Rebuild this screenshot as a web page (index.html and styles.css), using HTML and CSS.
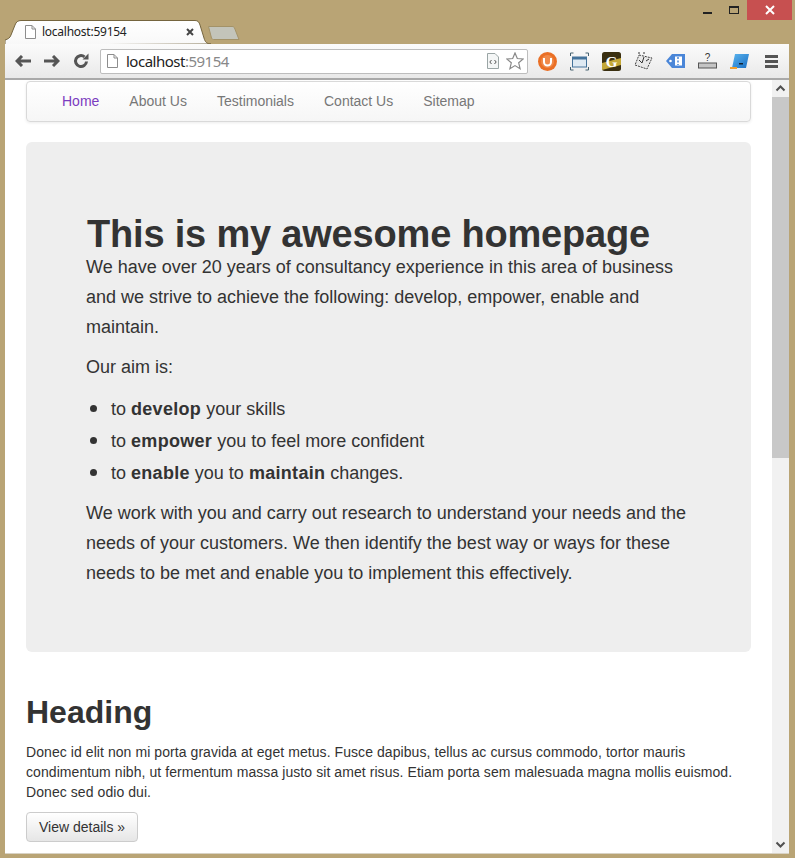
FILE: index.html
```html
<!DOCTYPE html>
<html lang="en">
<head>
<meta charset="utf-8">
<title>localhost:59154</title>
<link rel="stylesheet" href="styles.css">
</head>
<body>
<div class="titlebar">
  <div class="tabs">
    <div class="tab">
      <svg class="tab-shape" width="206" height="24" viewBox="0 0 206 24"><defs><linearGradient id="tg" x1="0" y1="0" x2="0" y2="1"><stop offset="0" stop-color="#fff"/><stop offset="1" stop-color="#f8f8f8"/></linearGradient></defs><path d="M0 25L0 20C3 19 5 18 6 15L10 5C11 2 13 .5 16 .5L190 .5C193 .5 194 2 195 5L199 18C200 22 202 24 206 24Z" fill="url(#tg)" stroke="#75653f"/></svg>
      <svg class="fav" width="11" height="14" viewBox="0 0 11 14"><path d="M.5.5H7L10.500 4V13.500H.5Z M7 .5V4H10.500" fill="#fff" stroke="#8d8d8d"/></svg>
      <span class="tab-title">localhost:59154</span>
      <svg class="tab-close" width="8" height="8" viewBox="0 0 8 8"><path d="M1 1L7 7M7 1L1 7" stroke="#444" stroke-width="2"/></svg>
    </div>
    <svg class="newtab" width="32" height="14" viewBox="0 0 32 14"><path d="M.5.5H24C25.500.5 26 1 26.500 2L31 13.500H5.500C4.500 13.500 4 13 3.500 12Z" fill="#c3c4ba" stroke="#a39268"/></svg>
  </div>
  <div class="winctl">
    <span class="min"></span>
    <span class="max"></span>
    <span class="close"><svg width="10" height="10" viewBox="0 0 10 10"><path d="M1 1L9 9M9 1L1 9" stroke="#fff" stroke-width="2"/></svg></span>
  </div>
</div>
<div class="window">
  <div class="toolbar">
    <div class="navbtns">
      <svg width="16" height="12" viewBox="0 0 16 12"><path d="M7 1L2 6L7 11M2 6H16" fill="none" stroke="#555" stroke-width="3"/></svg>
      <svg width="16" height="12" viewBox="0 0 16 12"><path d="M9 1L14 6L9 11M14 6H0" fill="none" stroke="#555" stroke-width="3"/></svg>
      <svg width="16" height="16" viewBox="0 0 16 16"><path d="M13.500 8.500A5.500 5.500 0 1 1 11.500 3.800" fill="none" stroke="#555" stroke-width="3"/><path d="M9.500 6.500H15.500V.5Z" fill="#555"/></svg>
    </div>
    <div class="omnibox">
      <svg width="11" height="14" viewBox="0 0 11 14"><path d="M.5.5H7L10.500 4V13.500H.5Z M7 .5V4H10.500" fill="#fff" stroke="#8d8d8d"/></svg>
      <span class="url"><span class="host">localhost</span>:59154</span>
      <svg class="srcicon" width="12" height="16" viewBox="0 0 12 16"><path d="M.5.5H8L11.500 4V15.500H.5Z" fill="#f4f6f6" stroke="#9aa5a5"/><path d="M4.500 7L2.800 9L4.500 11M7.500 7L9.200 9L7.500 11" fill="none" stroke="#555"/></svg>
      <svg class="star" width="18" height="18" viewBox="0 0 18 18"><path d="M9 1L11.300 6.500L17.200 7L12.700 10.800L14.100 16.700L9 13.600L3.900 16.700L5.300 10.800L.8 7L6.700 6.500Z" fill="#fff" stroke="#888" stroke-width="1.200"/></svg>
    </div>
    <div class="exts">
      <svg width="19" height="19" viewBox="0 0 19 19"><circle cx="9.500" cy="9.500" r="9.500" fill="#ea6f25"/><circle cx="9.500" cy="9.500" r="6.500" fill="#f08a4a"/><path d="M6 6V10A3.500 3.500 0 0 0 13 10V6" fill="none" stroke="#fff" stroke-width="2"/></svg>
      <svg width="19" height="19" viewBox="0 0 19 19"><rect x="2.500" y="5" width="14" height="10" fill="#dfeaf3" stroke="#44739b"/><rect x="3" y="5" width="13" height="2.500" fill="#44739b"/><path d="M.5 4V1H3.500M15.500 1H18.500V4M18.500 15V18H15.500M3.500 18H.5V15" fill="none" stroke="#44606f"/></svg>
      <svg width="19" height="19" viewBox="0 0 19 19"><rect width="19" height="19" rx="2.500" fill="#3a2f10"/><path d="M0 11L19 6V13L0 18Z" fill="#c4a838"/><text class="gmark" x="9.500" y="15" text-anchor="middle">G</text></svg>
      <svg width="19" height="18" viewBox="0 0 19 18"><path d="M5 3L18 6L13 17L1 13Z" fill="#e8e8e8" stroke="#444" stroke-dasharray="2 1"/><path d="M5 8L8 11M10 5L8 11M12 9L15 7M4 1H6M9 1H11" stroke="#333" fill="none"/></svg>
      <svg width="19" height="16" viewBox="0 0 19 16"><path d="M6 1H19V15H6L0 8Z" fill="#4a86d8"/><rect x="9" y="3.500" width="7" height="9" fill="#fff"/><path d="M12 4V12" stroke="#4a86d8" stroke-width="1.500" stroke-dasharray="2 1.500"/><circle cx="4.500" cy="8" r="1.300" fill="#fff"/></svg>
      <svg width="19" height="16" viewBox="0 0 19 16"><rect x=".5" y="10" width="18" height="5" fill="#c4c4c4" stroke="#555"/><text class="qmark" x="9.500" y="8" text-anchor="middle">?</text></svg>
      <svg width="19" height="17" viewBox="0 0 19 17"><defs><linearGradient id="cg" x1="0" y1="0" x2="1" y2="1"><stop offset="0" stop-color="#5ab4ee"/><stop offset="1" stop-color="#1a6fc4"/></linearGradient></defs><path d="M5 1H19L16 15H2Z" fill="url(#cg)"/><path d="M9 10H13V11.500H9Z" fill="#123"/><path d="M0 14H7V16H0Z" fill="#f0a030"/></svg>
    </div>
    <svg class="menu" width="13" height="13" viewBox="0 0 13 13"><path d="M0 1.500H13M0 6.500H13M0 11.500H13" stroke="#555" stroke-width="3"/></svg>
  </div>
  <div class="viewport">
    <main class="page">
      <nav class="navbar">
        <a class="navlink active" href="#">Home</a>
        <a class="navlink" href="#">About Us</a>
        <a class="navlink" href="#">Testimonials</a>
        <a class="navlink" href="#">Contact Us</a>
        <a class="navlink" href="#">Sitemap</a>
      </nav>
      <section class="jumbotron">
        <h1>This is my awesome homepage</h1>
        <p>We have over 20 years of consultancy experience in this area of business and we strive to achieve the following: develop, empower, enable and maintain.</p>
        <p>Our aim is:</p>
        <ul>
          <li>to <strong>develop</strong> your skills</li>
          <li>to <strong>empower</strong> you to feel more confident</li>
          <li>to <strong>enable</strong> you to <strong>maintain</strong> changes.</li>
        </ul>
        <p>We work with you and carry out research to understand your needs and the needs of your customers. We then identify the best way or ways for these needs to be met and enable you to implement this effectively.</p>
      </section>
      <h2>Heading</h2>
      <p class="body-copy">Donec id elit non mi porta gravida at eget metus. Fusce dapibus, tellus ac cursus commodo, tortor mauris condimentum nibh, ut fermentum massa justo sit amet risus. Etiam porta sem malesuada magna mollis euismod. Donec sed odio dui.</p>
      <a class="btn" href="#">View details »</a>
    </main>
    <div class="scrollbar">
      <svg class="arrow" width="17" height="17" viewBox="0 0 17 17"><path d="M4.500 10.500L8.500 6.500L12.500 10.500" fill="none" stroke="#505050" stroke-width="2"/></svg>
      <div class="thumb"></div>
      <svg class="arrow arrow-down" width="17" height="17" viewBox="0 0 17 17"><path d="M4.500 6.500L8.500 10.500L12.500 6.500" fill="none" stroke="#505050" stroke-width="2"/></svg>
    </div>
  </div>
</div>
</body>
</html>
```
FILE: styles.css
```css
* { box-sizing: border-box; }
html, body { margin: 0; height: 858px; overflow: hidden; }
body {
  background: #b9a475;
  padding: 0 6px 4px 5px;
  display: flex;
  flex-direction: column;
  font-family: "Liberation Sans", Arial, sans-serif;
  color: #333;
}
.titlebar {
  height: 44px;
  flex: none;
  display: flex;
  justify-content: space-between;
  margin-right: -3px;
}
.tabs {
  display: flex;
  align-items: flex-end;
}
.tab {
  position: relative;
  width: 206px;
  height: 24px;
  display: flex;
  align-items: center;
  padding: 0 0 1px 20px;
}
.tab-shape { position: absolute; left: 0; top: 0; }
.fav, .tab-title, .tab-close { position: relative; }
.tab-title {
  margin-left: 6px;
  font: 12px/16px "Noto Sans", sans-serif;
  letter-spacing: -0.25px;
  color: #222;
}
.tab-close { margin-left: 59px; }
.newtab { margin: 0 0 4px -3px; }
.winctl { display: flex; align-items: flex-start; height: 20px; }
.min { width: 9px; height: 2px; background: #222; margin: 12px 0 0; }
.max { width: 10px; height: 8px; border: 1px solid #222; border-top-width: 2px; margin: 6px 0 0 17px; }
.close {
  width: 45px;
  height: 20px;
  background: #c75050;
  margin-left: 8px;
  display: flex;
  align-items: center;
  justify-content: center;
}
.window { flex: 1; display: flex; flex-direction: column; min-height: 0; background: #fff; }
.toolbar {
  height: 36px;
  flex: none;
  display: flex;
  align-items: center;
  background: linear-gradient(#fbfbfb, #e9e9e9);
  border-bottom: 2px solid #a9a9a9;
  padding-left: 10px;
}
.navbtns { display: flex; align-items: center; gap: 13px; width: 85px; }
.omnibox {
  width: 428px;
  height: 25px;
  background: #fff;
  border: 1px solid #bdbdbd;
  border-radius: 2px;
  display: flex;
  align-items: center;
  padding-left: 6px;
}
.url {
  margin-left: 8px;
  font: 15px/20px "Noto Sans", sans-serif;
  letter-spacing: -0.5px;
  color: #888;
  flex: 1;
}
.host { color: #222; }
.srcicon { margin-right: 7px; }
.star { margin-right: 3px; }
.exts { display: flex; align-items: center; gap: 13px; margin-left: 10px; }
.gmark { font: bold 15px "Liberation Serif", serif; fill: #fff; }
.qmark { font: 10px "Liberation Sans", sans-serif; fill: #333; }
.menu { margin-left: 16px; }
.viewport { flex: 1; display: flex; min-height: 0; border-bottom: 1px solid #d8d2c4; }
.page { flex: 1; min-width: 0; padding: 1px 21px 0; overflow: hidden; }
.navbar {
  height: 41px;
  display: flex;
  align-items: center;
  padding: 0 0 2px 20px;
  margin-bottom: 20px;
  border: 1px solid #d9d9d9;
  border-radius: 4px;
  background: linear-gradient(#fff, #f6f6f6);
  box-shadow: 0 1px 3px rgba(0,0,0,.08);
}
.navlink {
  padding: 0 15px;
  font-size: 14px;
  line-height: 20px;
  color: #777;
  text-decoration: none;
}
.navlink.active { color: #7b3cc0; }
.jumbotron {
  height: 510px;
  padding: 60px;
  margin-bottom: 40px;
  background: #eee;
  border-radius: 6px;
  font-size: 18px;
  line-height: 30px;
}
.jumbotron h1 {
  margin: 0;
  font-size: 38px;
  letter-spacing: -0.19px;
  line-height: 50px;
  font-weight: bold;
  padding: 7px 0 0 1px;
  height: 50px;
}
.jumbotron p { margin: 0 0 10px; }
.jumbotron ul { margin: 0 0 10px; padding-left: 25px; }
.jumbotron li::marker { font-size: 24px; }
.jumbotron strong { letter-spacing: 0.3px; }
h2 {
  margin: 0 0 10px;
  font-size: 32px;
  line-height: 40px;
  font-weight: bold;
}
.body-copy { margin: 0 0 10px; font-size: 14px; line-height: 20px; letter-spacing: 0.07px; }
.btn {
  display: inline-block;
  padding: 5px 12px;
  font-size: 14px;
  line-height: 18px;
  color: #333;
  text-decoration: none;
  border: 1px solid #ccc;
  border-radius: 4px;
  background: linear-gradient(#fff, #e6e6e6);
}
.scrollbar {
  width: 17px;
  flex: none;
  background: #f1f1f1;
  display: flex;
  flex-direction: column;
}
.arrow { flex: none; }
.thumb { height: 361px; background: #c8c8c8; }
.arrow-down { margin-top: auto; }
```
